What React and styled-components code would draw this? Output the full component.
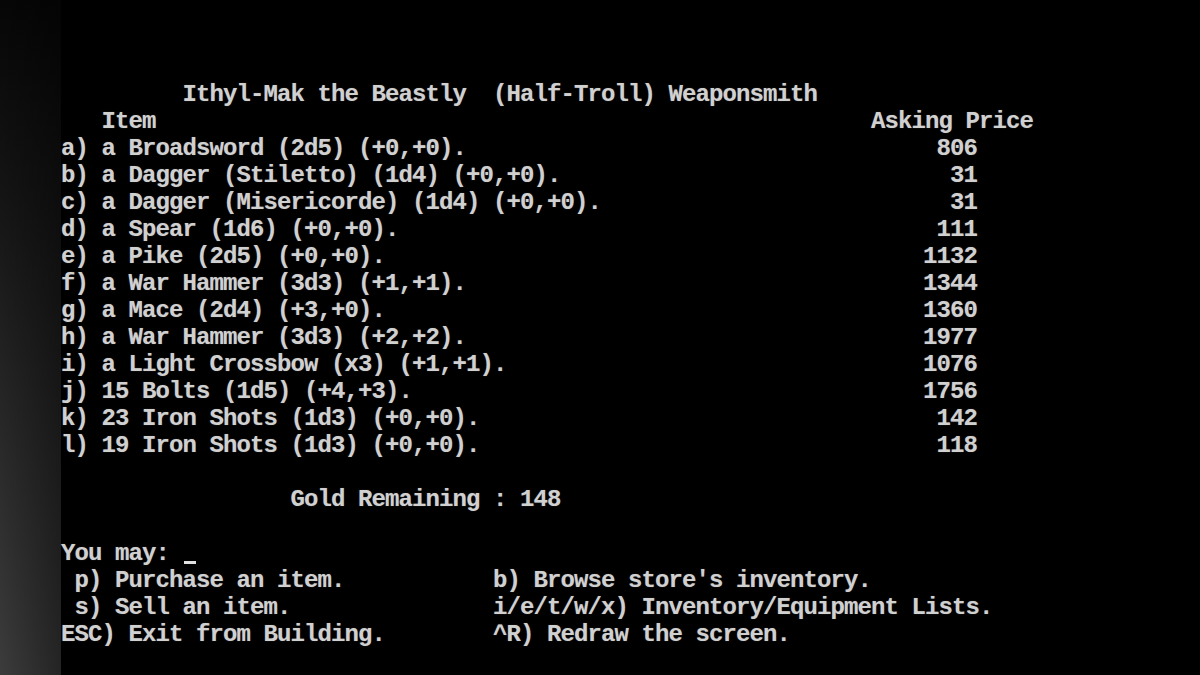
import React from "react";
import styled, { createGlobalStyle } from "styled-components";

const CELL_W = 13.5;
const CELL_H = 27;

const GlobalStyle = createGlobalStyle`
  html, body {
    margin: 0;
    padding: 0;
    background: #000;
  }
`;

const Screen = styled.div`
  display: flex;
  width: 1200px;
  height: 675px;
  overflow: hidden;
  background: #000;
`;

/* the grey monitor edge on the left of the photo */
const Bezel = styled.div`
  flex: 0 0 61px;
  height: 100%;
  background:
    linear-gradient(to right, rgba(0, 0, 0, 0) 0%, rgba(0, 0, 0, 0.4) 100%),
    linear-gradient(to bottom, #060606 0%, #151515 30%, #262626 60%, #3c3c3c 100%);
`;

const Terminal = styled.div`
  flex: 0 0 ${80 * CELL_W}px;
  display: flex;
  flex-direction: column;
  padding-top: ${3 * CELL_H}px;
  font-family: "Liberation Mono", "DejaVu Sans Mono", monospace;
  font-size: 24px;
  letter-spacing: -0.9px;
  font-weight: bold;
  line-height: ${CELL_H}px;
  color: #d0d0d0;
  text-shadow: 0 0 1px rgba(255, 255, 255, 0.35);
  white-space: pre;
`;

const Line = styled.div`
  height: ${CELL_H}px;
  padding-left: ${(p) => (p.$col || 0) * CELL_W}px;
`;

const Blank = styled.div`
  height: ${CELL_H}px;
`;

const ItemRow = styled.div`
  display: grid;
  grid-template-columns: ${60 * CELL_W}px ${8 * CELL_W}px;
  height: ${CELL_H}px;
`;

const Price = styled.span`
  text-align: right;
  padding-right: 2px;
`;

const HeaderCell = styled.span`
  padding-left: ${(p) => (p.$col || 0) * CELL_W}px;
`;

const MenuRow = styled.div`
  display: grid;
  grid-template-columns: ${32 * CELL_W}px 1fr;
  height: ${CELL_H}px;
`;

const Cursor = styled.span`
  display: inline-block;
  width: ${CELL_W}px;
  height: ${CELL_H}px;
  vertical-align: top;
  position: relative;

  &::after {
    content: "";
    position: absolute;
    left: 1px;
    right: 0;
    bottom: 3px;
    height: 3px;
    background: #e0e0e0;
  }
`;

const items = [
  ["a) a Broadsword (2d5) (+0,+0).", 806],
  ["b) a Dagger (Stiletto) (1d4) (+0,+0).", 31],
  ["c) a Dagger (Misericorde) (1d4) (+0,+0).", 31],
  ["d) a Spear (1d6) (+0,+0).", 111],
  ["e) a Pike (2d5) (+0,+0).", 1132],
  ["f) a War Hammer (3d3) (+1,+1).", 1344],
  ["g) a Mace (2d4) (+3,+0).", 1360],
  ["h) a War Hammer (3d3) (+2,+2).", 1977],
  ["i) a Light Crossbow (x3) (+1,+1).", 1076],
  ["j) 15 Bolts (1d5) (+4,+3).", 1756],
  ["k) 23 Iron Shots (1d3) (+0,+0).", 142],
  ["l) 19 Iron Shots (1d3) (+0,+0).", 118],
];

const commands = [
  [" p) Purchase an item.", "b) Browse store's inventory."],
  [" s) Sell an item.", "i/e/t/w/x) Inventory/Equipment Lists."],
  ["ESC) Exit from Building.", "^R) Redraw the screen."],
];

const App = () => {
  return (
    <Screen>
      <GlobalStyle />
      <Bezel />
      <Terminal>
        <Line $col={9}>Ithyl-Mak the Beastly  (Half-Troll) Weaponsmith</Line>
        <ItemRow>
          <HeaderCell $col={3}>Item</HeaderCell>
          <HeaderCell>Asking Price</HeaderCell>
        </ItemRow>
        {items.map(([name, price]) => (
          <ItemRow key={name}>
            <span>{name}</span>
            <Price>{price}</Price>
          </ItemRow>
        ))}
        <Blank />
        <Line $col={17}>Gold Remaining : 148</Line>
        <Blank />
        <Line>
          You may: <Cursor />
        </Line>
        {commands.map(([left, right]) => (
          <MenuRow key={left}>
            <span>{left}</span>
            <span>{right}</span>
          </MenuRow>
        ))}
      </Terminal>
    </Screen>
  );
};

export default App;
